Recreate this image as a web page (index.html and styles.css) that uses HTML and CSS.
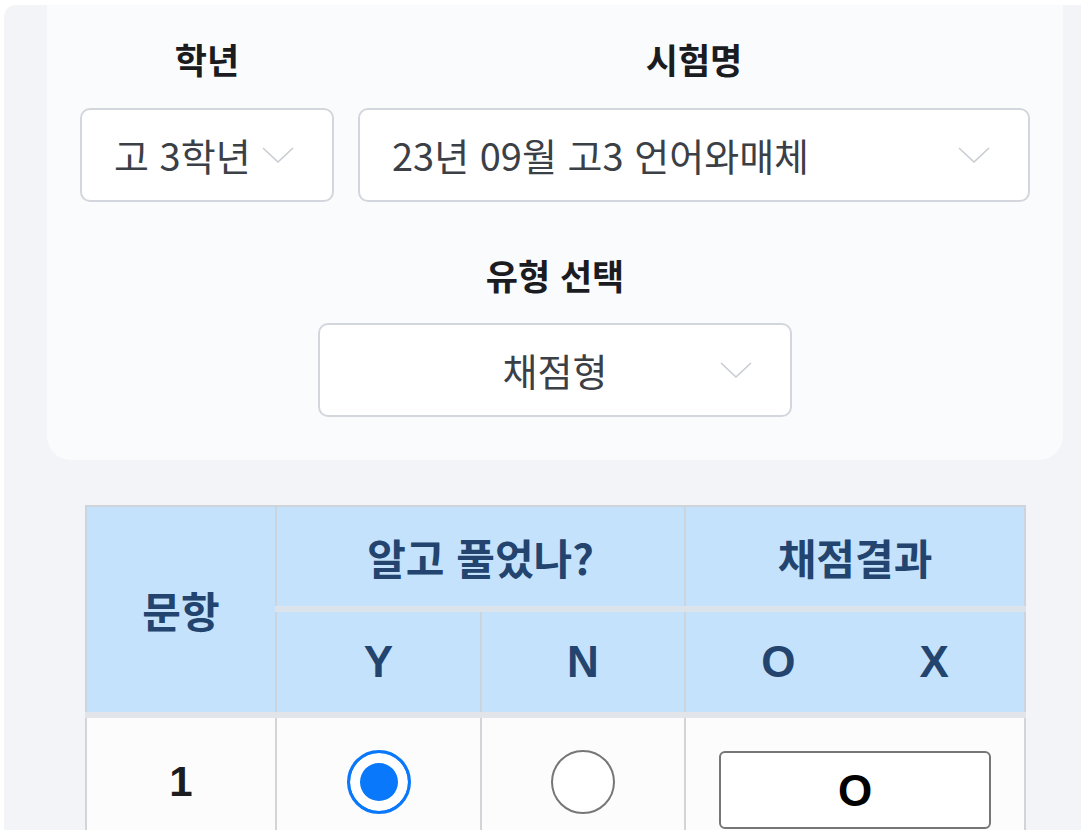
FILE: index.html
```html
<!DOCTYPE html>
<html lang="ko">
<head>
<meta charset="utf-8">
<title>채점</title>
<link rel="stylesheet" href="styles.css">
</head>
<body>
<div class="wrap">
  <section class="card">
    <div class="row">
      <div class="field field-grade">
        <div class="label">학년</div>
        <div class="select">
          <span class="value">고 3학년</span>
          <svg class="chev" viewBox="0 0 32 16" width="32" height="16"><path d="M1 1 L16 15 L31 1" fill="none" stroke="#c9cdd3" stroke-width="1.6"/></svg>
        </div>
      </div>
      <div class="field field-exam">
        <div class="label">시험명</div>
        <div class="select">
          <span class="value">23년 09월 고3 언어와매체</span>
          <svg class="chev" viewBox="0 0 32 16" width="32" height="16"><path d="M1 1 L16 15 L31 1" fill="none" stroke="#c9cdd3" stroke-width="1.6"/></svg>
        </div>
      </div>
    </div>
    <div class="field field-type">
      <div class="label">유형 선택</div>
      <div class="select select-center">
        <span></span>
        <span class="value">채점형</span>
        <svg class="chev" viewBox="0 0 32 16" width="32" height="16"><path d="M1 1 L16 15 L31 1" fill="none" stroke="#c9cdd3" stroke-width="1.6"/></svg>
      </div>
    </div>
  </section>

  <table class="grid">
    <colgroup>
      <col class="c1"><col class="c2"><col class="c3"><col class="c4">
    </colgroup>
    <thead>
      <tr class="h1">
        <th rowspan="2" class="num-h">문항</th>
        <th colspan="2">알고 풀었나?</th>
        <th>채점결과</th>
      </tr>
      <tr class="h2">
        <th class="lat">Y</th>
        <th class="lat">N</th>
        <th class="lat"><span class="ox"><span>O</span><span>X</span></span></th>
      </tr>
    </thead>
    <tbody>
      <tr>
        <td class="num">1</td>
        <td class="rad"><span class="radio on"></span></td>
        <td class="rad"><span class="radio"></span></td>
        <td class="res"><div class="resbox">O</div></td>
      </tr>
    </tbody>
  </table>
</div>
</body>
</html>
```
FILE: styles.css
```css
* { box-sizing: border-box; }
html, body { margin: 0; padding: 0; background: #ffffff; }
body {
  font-family: "Noto Sans CJK KR", "Noto Sans", sans-serif;
  overflow: hidden;
  height: 830px;
}
.wrap {
  margin: 5px 0 0 4px;
  background: #f3f4f8;
  border-top-left-radius: 12px;
  padding: 0 0 40px 43px;
  min-height: 825px;
}
.card {
  width: 1016px;
  background: #fafbfc;
  border-radius: 0 0 24px 24px;
  padding: 34px 33px 43px;
  display: flex;
  flex-direction: column;
  align-items: center;
  gap: 53px;
}
.row {
  display: flex;
  gap: 24px;
  width: 100%;
}
.field {
  display: flex;
  flex-direction: column;
  align-items: center;
  gap: 29px;
}
.field-grade { width: 254px; }
.field-exam { flex: 1; }
.field-type { width: 474px; gap: 28px; }
.label {
  font-size: 35px;
  line-height: 40px;
  font-weight: 700;
  color: #1b1c1f;
}
.select {
  width: 100%;
  height: 94px;
  background: #ffffff;
  border: 2px solid #d3d7dd;
  border-radius: 10px;
  display: flex;
  align-items: center;
  justify-content: space-between;
  padding: 0 38px 0 32px;
}
.select .value {
  font-size: 38px;
  line-height: 44px;
  color: #3b4047;
  white-space: nowrap;
}
.select-center {
  display: grid;
  grid-template-columns: 1fr auto 1fr;
  padding: 0 38px;
}
.select-center .chev { justify-self: end; }
.chev { display: block; flex: none; }

.grid {
  margin: 45px 0 0 38px;
  width: 939px;
  border-collapse: collapse;
  table-layout: fixed;
  border: 2px solid #cfd4da;
}
.c1 { width: 190px; }
.c2 { width: 205px; }
.c3 { width: 204px; }
.c4 { width: 340px; }
.grid th {
  background: #c5e2fc;
  color: #22446e;
  font-size: 42px;
  font-weight: 700;
  border-left: 2px solid #cdd4dc;
  border-right: 2px solid #cdd4dc;
  padding: 0;
}
.grid th.lat {
  font-family: "Liberation Sans", Arial, sans-serif;
  font-size: 44px;
}
.h1 th { height: 103px; border-bottom: 6px solid #dde3ea; }
.h1 th.num-h { border-bottom: 6px solid #e1e5ea; }
.h2 th { height: 106px; border-bottom: 6px solid #e1e5ea; }
.ox {
  display: flex;
  justify-content: center;
  gap: 124px;
}
.grid td {
  background: #fcfcfc;
  border-left: 2px solid #d2d4d7;
  border-right: 2px solid #d2d4d7;
  height: 130px;
  vertical-align: top;
  text-align: center;
  padding: 0;
}
.num {
  font-family: "Liberation Sans", Arial, sans-serif;
  font-size: 42px;
  font-weight: 700;
  color: #1b1d21;
  line-height: 40px;
  padding-top: 44px !important;
}
.rad { padding-top: 32px !important; }
.radio {
  display: inline-block;
  width: 64px;
  height: 64px;
  border-radius: 50%;
  border: 2px solid #767676;
  background: #ffffff;
  vertical-align: top;
}
.radio.on {
  border: 3px solid #0a78fa;
  background: #0a78fa;
  box-shadow: inset 0 0 0 10px #ffffff;
}
.res { padding: 33px 0 0 0 !important; }
.resbox {
  margin: 0 auto;
  width: 272px;
  height: 78px;
  border: 2px solid #767676;
  border-radius: 6px;
  background: #ffffff;
  font-family: "Liberation Sans", Arial, sans-serif;
  font-weight: 700;
  font-size: 44px;
  line-height: 76px;
  color: #000000;
}
```
